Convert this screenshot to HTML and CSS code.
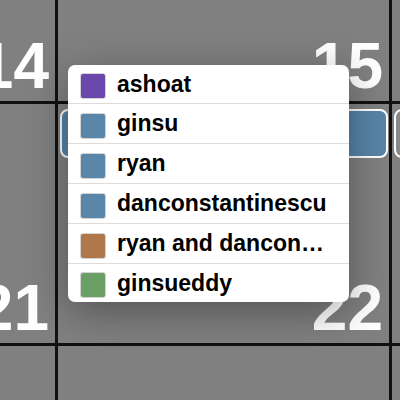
FILE: index.html
```html
<!DOCTYPE html>
<html lang="en">
<head>
  <meta charset="UTF-8">
  <title>Calendar</title>
  <link rel="stylesheet" href="styles.css">
</head>
<body>

  <div class="calendar">
    <div class="day"><span class="num">14</span></div>
    <div class="day"><span class="num">15</span></div>
    <div class="day"></div>

    <div class="day"><span class="num">21</span></div>
    <div class="day">
      <div class="entry"></div>
      <span class="num">22</span>
    </div>
    <div class="day">
      <div class="entry empty"></div>
    </div>

    <div class="day"></div>
    <div class="day"></div>
    <div class="day"></div>
  </div>

  <!-- thread picker, opened over the calendar -->
  <div class="picker">
    <div class="row"><span class="swatch purple"></span>ashoat</div>
    <div class="row"><span class="swatch blue"></span>ginsu</div>
    <div class="row"><span class="swatch blue"></span>ryan</div>
    <div class="row"><span class="swatch blue"></span>danconstantinescu</div>
    <div class="row"><span class="swatch brown"></span>ryan and dancon…</div>
    <div class="row"><span class="swatch green"></span>ginsueddy</div>
  </div>

</body>
</html>
```

FILE: styles.css
```css
body {
  margin: 0;
  width: 400px;
  height: 400px;
  overflow: hidden;
  background-color: #111;
  font-family: "Liberation Sans", Arial, sans-serif;
}

.calendar {
  display: grid;
  grid-template-columns: 55px 331px 1fr;
  grid-template-rows: 101px 239px 1fr;
  gap: 3px;
  height: 400px;
  background-color: #111;
}

.day {
  background-color: #808080;
  display: flex;
  flex-direction: column;
  min-width: 0;
  overflow: hidden;
}

.num {
  margin-top: auto;
  align-self: flex-end;
  padding: 0 6px 3px 0;
  font-size: 64px;
  font-weight: bold;
  line-height: 1;
  color: #fff;
}

.entry {
  margin: 5px 1px 0 2px;
  height: 45px;
  border: 2px solid #fff;
  border-radius: 8px;
  background-color: #5884a8;
}

.entry.empty {
  width: 40px;
  background-color: #888;
}

.picker {
  position: absolute;
  left: 68px;
  top: 65px;
  width: 281px;
  background-color: #fff;
  border-radius: 7px;
  box-shadow: 0 10px 40px rgba(0, 0, 0, 0.35);
  overflow: hidden;
}

.row {
  display: flex;
  align-items: center;
  gap: 11px;
  height: 39px;
  padding-left: 12px;
  border-top: 1px solid #dcdcdc;
  font-size: 23px;
  font-weight: bold;
  color: #000;
  white-space: nowrap;
}

.row:first-child {
  height: 38px;
  border-top: none;
}

.row:last-child {
  height: 38px;
}

.swatch {
  width: 24px;
  height: 24px;
  margin-top: 4px;
  border: 1px solid #d4d4d4;
  border-radius: 3px;
}

.purple { background-color: #6a48ab; }
.blue { background-color: #5a86aa; }
.brown { background-color: #b0784a; }
.green { background-color: #6a9f65; }
```
